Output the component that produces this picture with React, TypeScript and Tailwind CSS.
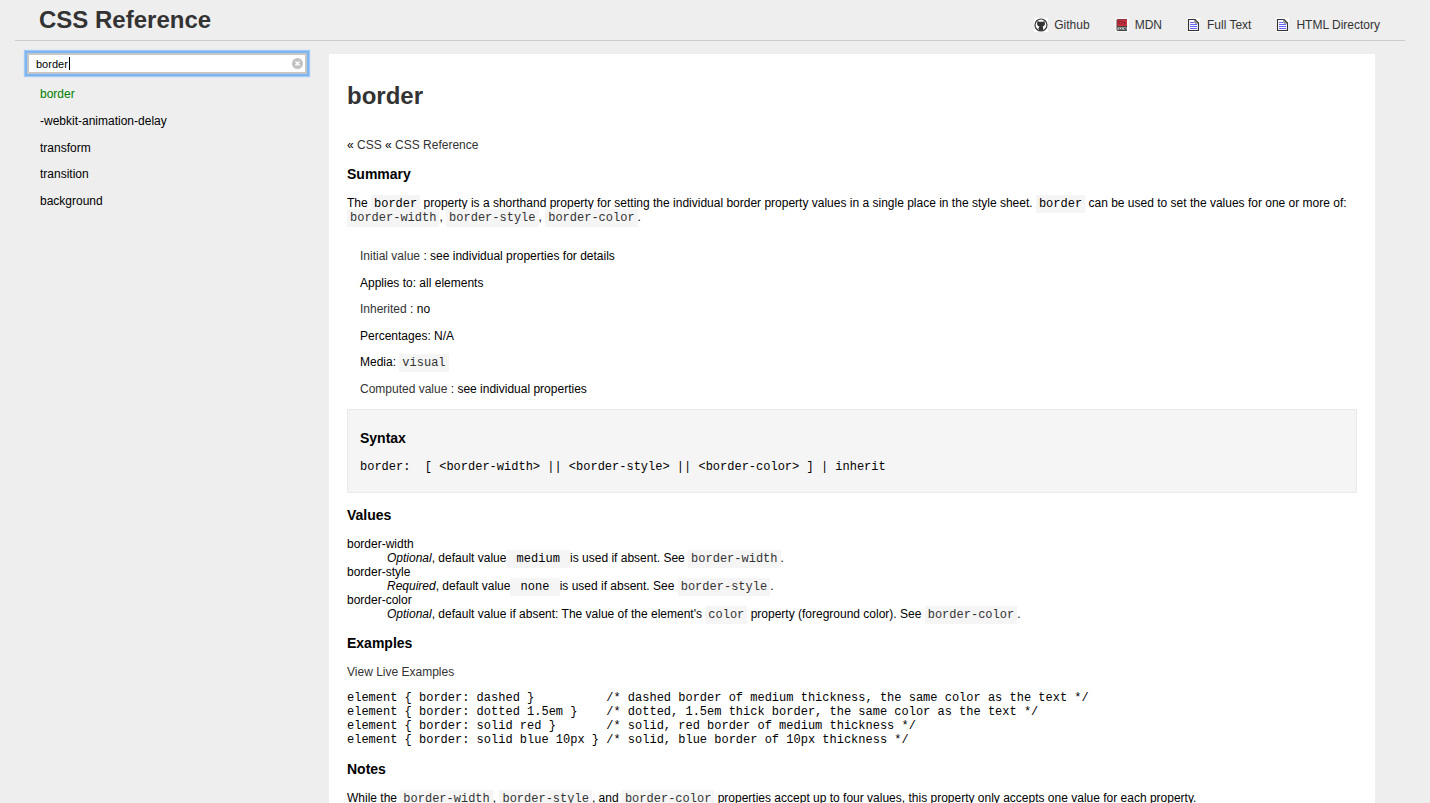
import type { ReactNode } from 'react';

const results = ['border', '-webkit-animation-delay', 'transform', 'transition', 'background'];

const examples = `element { border: dashed }          /* dashed border of medium thickness, the same color as the text */
element { border: dotted 1.5em }    /* dotted, 1.5em thick border, the same color as the text */
element { border: solid red }       /* solid, red border of medium thickness */
element { border: solid blue 10px } /* solid, blue border of 10px thickness */`;

function Link({ children }: { children: ReactNode }) {
  return <a href="#" className="text-[#333] hover:underline">{children}</a>;
}

function Code({ children }: { children: ReactNode }) {
  return <code className="bg-[#f5f5f5] px-[3px] py-[2px] font-['Liberation_Mono',monospace] text-xs leading-[10px] whitespace-pre">{children}</code>;
}

function CodeLink({ children }: { children: ReactNode }) {
  return <Link><Code>{children}</Code></Link>;
}

function Heading({ children }: { children: ReactNode }) {
  return <h2 className="my-[14px] text-sm leading-4 font-bold">{children}</h2>;
}

function GithubIcon() {
  return (
    <svg viewBox="0 0 14 14" className="size-[14px]" aria-hidden="true">
      <rect width="14" height="14" fill="#fff" />
      <circle cx="7" cy="7" r="6" fill="#fff" stroke="#3a3a3a" strokeWidth="1.2" />
      <path d="M3.500 3 5.200 3.700h3.600L10.500 3l.4 2.300c.1 1.800-.7 2.800-2.200 3.200l.4 1v3.200H4.900v-1.500L3.400 10l1.500.2.4-1.700C3.800 8.100 3 7.100 3.100 5.300Z" fill="#333" />
    </svg>
  );
}

function MdnIcon() {
  return (
    <svg viewBox="0 0 14 14" className="size-[14px]" aria-hidden="true">
      <rect width="14" height="14" fill="#f8f8f8" />
      <path d="M2.500 1H12v12H2.500L1.500 12V2Z" fill="#444" />
      <path d="M2.500 1.500H12V8H2Z" fill="#d22c3c" />
      <path d="M4 6.500V3.500h2.500M6 6.500l2-3 2.500 1.500L8.500 6.500" fill="none" stroke="#702832" />
      <path d="M2.500 9.500h9v2.500h-9z" fill="#ddd" />
      <path d="M4 12v-1.500l1.500 1 1.500-1V12M9 12v-1.500h1.500V12" fill="none" stroke="#444" />
    </svg>
  );
}

function PageIcon() {
  return (
    <svg viewBox="0 0 14 14" className="size-[14px]" aria-hidden="true">
      <rect width="13" height="14" fill="#fff" />
      <path d="M1.500 1.500h6.500l3.500 3.500v7.500h-10Z" fill="#fff" stroke="#333" strokeWidth="1.200" />
      <path d="M8 1.500V5h3.500" fill="none" stroke="#555" />
      <path d="M3 4.500h4M3 6.500h7M3 8.500h7M3 10.500h7" stroke="#6464ff" strokeWidth="1.200" />
    </svg>
  );
}

const navLinks = [
  { label: 'Github', icon: <GithubIcon /> },
  { label: 'MDN', icon: <MdnIcon /> },
  { label: 'Full Text', icon: <PageIcon /> },
  { label: 'HTML Directory', icon: <PageIcon /> },
];

export default function App() {
  return (
    <div className="min-h-screen bg-[#eee] font-['Liberation_Sans',Arial,sans-serif] text-xs leading-[14px] text-black">
      <header className="mr-[25px] ml-[15px] flex h-[41px] justify-between border-b border-[#ccc] pr-[25px] pl-6">
        <h1 className="pt-[6px] text-2xl leading-7 font-bold text-[#333]">CSS Reference</h1>
        <nav className="flex gap-[25px] pt-[18px]">
          {navLinks.map(({ label, icon }) => (
            <a key={label} href="#" className="flex h-[14px] gap-[6px] text-[#333] hover:underline">
              {icon}
              {label}
            </a>
          ))}
        </nav>
      </header>

      <div className="flex pt-3">
        <aside className="w-[329px] shrink-0 pr-[22px] pl-[27px]">
          <div className="relative">
            <input
              aria-label="Search properties"
              defaultValue="border"
              className="block h-[21px] w-full border-2 border-[#c6c6c6] bg-white pr-5 pl-[7px] text-[11px] caret-transparent shadow-[0_0_0_2px_#7db4f2,0_0_1px_3px_#a3c9f5] outline-none"
            />
            <span className="absolute top-1 left-[42px] h-[13px] w-px bg-black" aria-hidden="true" />
            <button type="button" aria-label="Clear search" className="absolute top-[5px] right-1 size-[11px]">
              <svg viewBox="0 0 11 11" className="size-[11px]" aria-hidden="true">
                <circle cx="5.500" cy="5.500" r="5.500" fill="#c2c2c2" />
                <path d="m3.500 3.500 4 4m0-4-4 4" stroke="#fff" strokeWidth="1.500" />
              </svg>
            </button>
          </div>
          <ul className="mt-[13px] flex h-[121px] flex-col justify-between pl-[13px]">
            {results.map((name, index) => (
              <li key={name}>
                <a href="#" className={index === 0 ? 'text-[#008000]' : 'text-black'}>{name}</a>
              </li>
            ))}
          </ul>
        </aside>

        <main className="mt-px mr-[55px] min-w-0 flex-1 bg-white px-[18px] pt-7 pb-6">
          <h1 className="text-2xl leading-7 font-bold text-[#333]">border</h1>
          <nav className="mt-7">
            « <Link>CSS</Link> « <Link>CSS Reference</Link>
          </nav>

          <Heading>Summary</Heading>
          <p>
            The <Code>border</Code> property is a shorthand property for setting the individual border property values in a
            single place in the style sheet. <Code>border</Code> can be used to set the values for one or more of:{' '}
            <CodeLink>border-width</CodeLink>, <CodeLink>border-style</CodeLink>, <CodeLink>border-color</CodeLink>.
          </p>
          <ul className="mt-[25px] mb-[13px] flex h-[147px] flex-col justify-between pl-[13px]">
            <li><Link>Initial value</Link> : see individual properties for details</li>
            <li>Applies to: all elements</li>
            <li><Link>Inherited</Link> : no</li>
            <li>Percentages: N/A</li>
            <li>Media: <CodeLink>visual</CodeLink></li>
            <li><Link>Computed value</Link> : see individual properties</li>
          </ul>

          <section className="border border-[#eaeaea] bg-[#f5f5f5] px-3 pt-[6px] pb-[18px]">
            <Heading>Syntax</Heading>
            <pre className="font-['Liberation_Mono',monospace]">{'border:  [ <border-width> || <border-style> || <border-color> ] | inherit'}</pre>
          </section>

          <Heading>Values</Heading>
          <dl>
            <dt>border-width</dt>
            <dd className="pl-10"><em>Optional</em>, default value<Code>{' medium '}</Code>is used if absent. See <CodeLink>border-width</CodeLink>.</dd>
            <dt>border-style</dt>
            <dd className="pl-10"><em>Required</em>, default value<Code>{' none '}</Code>is used if absent. See <CodeLink>border-style</CodeLink>.</dd>
            <dt>border-color</dt>
            <dd className="pl-10">
              <em>Optional</em>, default value if absent: The value of the element's <CodeLink>color</CodeLink> property
              (foreground color). See <CodeLink>border-color</CodeLink>.
            </dd>
          </dl>

          <Heading>Examples</Heading>
          <p><Link>View Live Examples</Link></p>
          <pre className="mt-3 font-['Liberation_Mono',monospace]">{examples}</pre>

          <Heading>Notes</Heading>
          <p>
            While the <CodeLink>border-width</CodeLink>, <CodeLink>border-style</CodeLink>, and{' '}
            <CodeLink>border-color</CodeLink> properties accept up to four values, this property only accepts one value for
            each property.
          </p>
        </main>
      </div>
    </div>
  );
}
